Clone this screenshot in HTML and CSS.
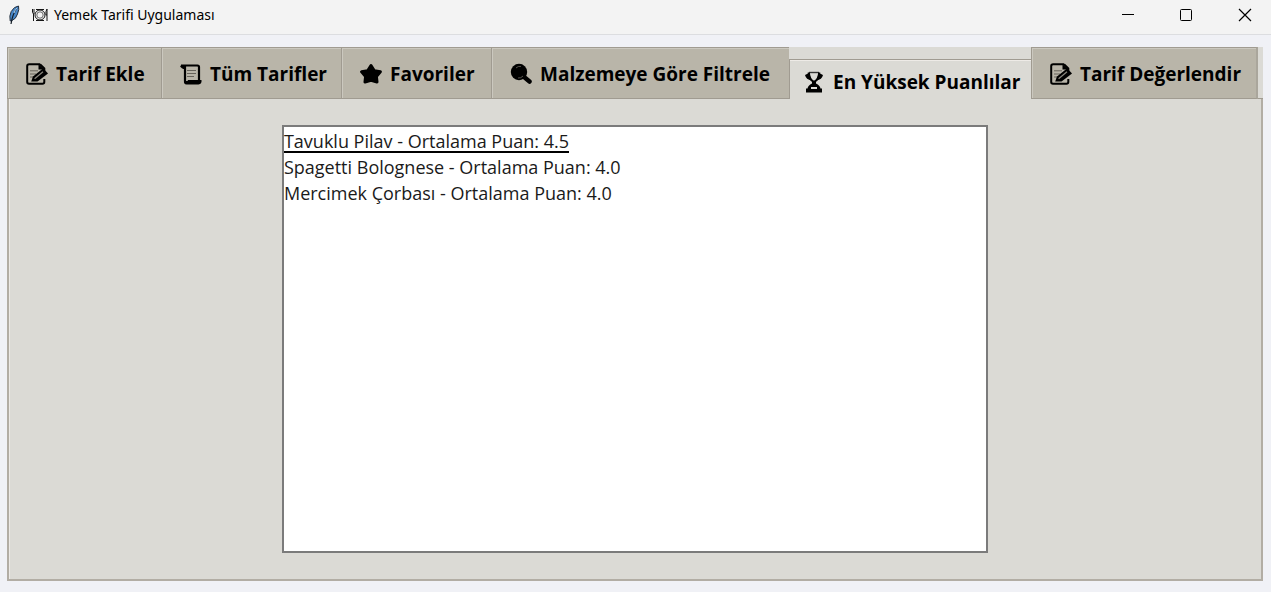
FILE: index.html
```html
<!DOCTYPE html>
<html lang="tr">
<head>
<meta charset="utf-8">
<title>Yemek Tarifi Uygulaması</title>
<link rel="stylesheet" href="styles.css">
</head>
<body>
<svg class="symbols" aria-hidden="true">
  <symbol id="memo" viewBox="0 0 22 22">
    <path d="M14 1.2H3.2Q1.2 1.2 1.2 3V19Q1.2 20.8 3 20.8H16.5Q18.3 20.8 18.3 19V16M14 1.2L18.3 5.5V8" fill="none" stroke="#000" stroke-width="2"/>
    <path d="M12.5 1V6.5H18.5Z"/>
    <path d="M4 7.8H12M4 11H10M4 14H8" stroke="#67635b" stroke-width="1"/>
    <path d="M5.2 18.6L7 13.5L17.2 5.2L22 10.5L11.5 18.5Z"/>
    <path d="M8.6 15.8L17 8.8" stroke="#8b877e" stroke-width="1.2"/>
  </symbol>
  <symbol id="scroll" viewBox="0 0 22 22">
    <path d="M1 2.5H17.5Q19 2.5 19 4V17M5 3V18.5M1 2.5Q2 5 5 5" fill="none" stroke="#000" stroke-width="2.2"/>
    <path d="M7.5 17H21.5Q22 21 18.5 21.5H6.5Q3.5 21.2 4 18H8Z"/>
    <path d="M7 7.5H16M7 10.5H16M7 13.5H14" stroke="#67635b" stroke-width="1"/>
  </symbol>
  <symbol id="star" viewBox="0 0 22 22">
    <path d="M11 2.5L14.2 7.6L20.4 8.8L16.4 13.4L17 19L11 17.4L5 19L5.6 13.4L1.6 8.8L7.8 7.6Z" stroke="#000" stroke-width="3" stroke-linejoin="round"/>
  </symbol>
  <symbol id="lens" viewBox="0 0 22 22">
    <circle cx="9" cy="9" r="8.2"/>
    <path d="M13.5 13.5L19.5 18.5" stroke="#000" stroke-width="4.5" stroke-linecap="round"/>
    <path d="M6 5Q8 2.8 11 3.4M8 15Q11 15.4 13 13" fill="none" stroke="#55524c" stroke-width="1"/>
  </symbol>
  <symbol id="trophy" viewBox="0 0 22 22">
    <path d="M6 1.5H16" stroke="#333" stroke-width="1.4"/>
    <path d="M5.8 1.5Q6 8.5 11 11Q16 8.5 16.2 1.5" fill="none" stroke="#000" stroke-width="2.2"/>
    <path d="M5 2.5L2 4Q3 8.5 8.5 9.5L6 3ZM17 2.5L20 4Q19 8.5 13.5 9.5L16 3Z"/>
    <path d="M9 10H13V12.5Q17 14.5 17.5 17.5H19V21.5H3V17.5H4.5Q5 14.5 9 12.5Z"/>
    <path d="M8 17H14" stroke="#dbdad5" stroke-width="2"/>
  </symbol>
</svg>
<header class="titlebar">
  <svg class="feather" viewBox="0 0 12 20" aria-hidden="true">
    <path d="M10.5 1Q6 1.5 3.2 6.5Q1 11 2.2 16L4 15.5Q8 14 9.5 9Q11.5 4 10.5 1Z" fill="#4787ca" stroke="#24303e" stroke-width="1"/>
    <path d="M9 3Q4.5 9 3 19" fill="none" stroke="#111b25" stroke-width="1.2"/>
    <path d="M9 3Q7 5 6 8" fill="none" stroke="#b8dcf8" stroke-width="1"/>
  </svg>
  <svg class="plate" viewBox="0 0 16 14" aria-hidden="true">
    <g fill="none" stroke="#151515" stroke-width="1">
      <circle cx="8" cy="7" r="5"/><circle cx="8" cy="7" r="3.2" stroke="#666"/>
      <path d="M.5 1V4.5Q1 6 2 6V1M1.5 6V13M15 1Q13.5 3 14 7H15M15 1V13M4 1.5H12M4 12.5H12"/>
    </g>
  </svg>
  <h1 class="title">Yemek Tarifi Uygulaması</h1>
  <div class="controls">
    <button class="control" aria-label="Simge durumuna küçült"><svg viewBox="0 0 14 14"><path d="M1 6.5H13"/></svg></button>
    <button class="control" aria-label="Ekranı kapla"><svg viewBox="0 0 14 14"><rect x="1.5" y="1.5" width="11" height="11" rx="1"/></svg></button>
    <button class="control" aria-label="Kapat"><svg viewBox="0 0 14 14"><path d="M1 1L13 13M13 1L1 13"/></svg></button>
  </div>
</header>
<main class="notebook">
  <div class="tabs" role="tablist">
    <button class="tab" role="tab"><svg class="icon"><use href="#memo"/></svg>Tarif Ekle</button>
    <button class="tab" role="tab"><svg class="icon"><use href="#scroll"/></svg>Tüm Tarifler</button>
    <button class="tab" role="tab"><svg class="icon"><use href="#star"/></svg>Favoriler</button>
    <button class="tab" role="tab"><svg class="icon"><use href="#lens"/></svg>Malzemeye Göre Filtrele</button>
    <button class="tab selected" role="tab" aria-selected="true"><svg class="icon"><use href="#trophy"/></svg>En Yüksek Puanlılar</button>
    <button class="tab" role="tab"><svg class="icon"><use href="#memo"/></svg>Tarif Değerlendir</button>
  </div>
  <section class="panel" role="tabpanel">
    <ul class="list" role="listbox" tabindex="0" aria-label="En Yüksek Puanlılar">
      <li role="option"><span class="active">Tavuklu Pilav - Ortalama Puan: 4.5</span></li>
      <li role="option">Spagetti Bolognese - Ortalama Puan: 4.0</li>
      <li role="option">Mercimek Çorbası - Ortalama Puan: 4.0</li>
    </ul>
  </section>
</main>
</body>
</html>
```

FILE: styles.css
```css
* { box-sizing: border-box; }
body {
  margin: 0;
  min-height: 100vh;
  display: flex;
  flex-direction: column;
  background: #f0f1f6;
  color: #000;
  font-family: "Open Sans", "Noto Sans", sans-serif;
}
button { border: 0; background: none; color: inherit; font: inherit; padding: 0; }
.symbols { position: absolute; width: 0; height: 0; }
.titlebar {
  display: flex;
  align-items: center;
  height: 35px;
  padding: 0 0 5px 8px;
  background: #f3f3f3;
  border-bottom: 1px solid #dcdde0;
}
.feather { width: 12px; height: 20px; margin-right: 12px; }
.plate { width: 16px; height: 14px; margin-right: 6px; }
.title { margin: 0; font-size: 14px; line-height: 20px; font-weight: 400; font-family: "Noto Sans", sans-serif; }
.controls { display: flex; margin-left: auto; }
.control { width: 58px; height: 29px; display: grid; place-items: center; }
.control:last-child { width: 52px; margin-left: 4px; }
.control svg { width: 14px; height: 14px; fill: none; stroke: #000; stroke-width: 1; }
.control:last-child svg { stroke-width: 1.2; }
.notebook {
  flex: 1;
  display: flex;
  flex-direction: column;
  margin: 12px 8px 11px 7px;
}
.tabs {
  display: grid;
  grid-template-columns: 154fr 180fr 150fr 298fr 242fr 227fr;
  height: 52px;
  padding-right: 5px;
  background: linear-gradient(#a09b91, #a09b91) bottom / 100% 1px no-repeat #dbdad5;
}
.tab {
  display: flex;
  align-items: center;
  gap: 8px;
  min-width: 0;
  padding: 2px 0 0 18px;
  background: #b9b5a9;
  border: 1px solid #a09b91;
  border-right: 0;
  box-shadow: inset 1px 1px #cbc8bf;
  font-size: 19px;
  line-height: 24px;
  font-weight: 700;
  white-space: nowrap;
}
.tab:last-child { border-right: 2px solid #aaa69c; }
.tab.selected {
  margin-top: 12px;
  padding: 4px 0 0 13px;
  background: #dbdad5;
  border-bottom: 0;
  box-shadow: inset 0 1px #eeebe7;
}
.icon { width: 22px; height: 22px; flex: none; }
.panel {
  flex: 1;
  display: flex;
  justify-content: center;
  padding: 26px 0;
  background: #dbdad5;
  border: 2px solid #b2ada4;
  border-top: 0;
  box-shadow: inset 1px 0 #ece9e5;
}
.list {
  width: 56.4%;
  margin: 0;
  padding: 1px 0;
  list-style: none;
  background: #fff;
  border: 2px solid #7b7b7b;
  font-size: 18px;
  line-height: 26px;
  color: #1a1a1a;
}
.active { display: inline-block; height: 25px; border-bottom: 2px solid #000; vertical-align: top; }
```
